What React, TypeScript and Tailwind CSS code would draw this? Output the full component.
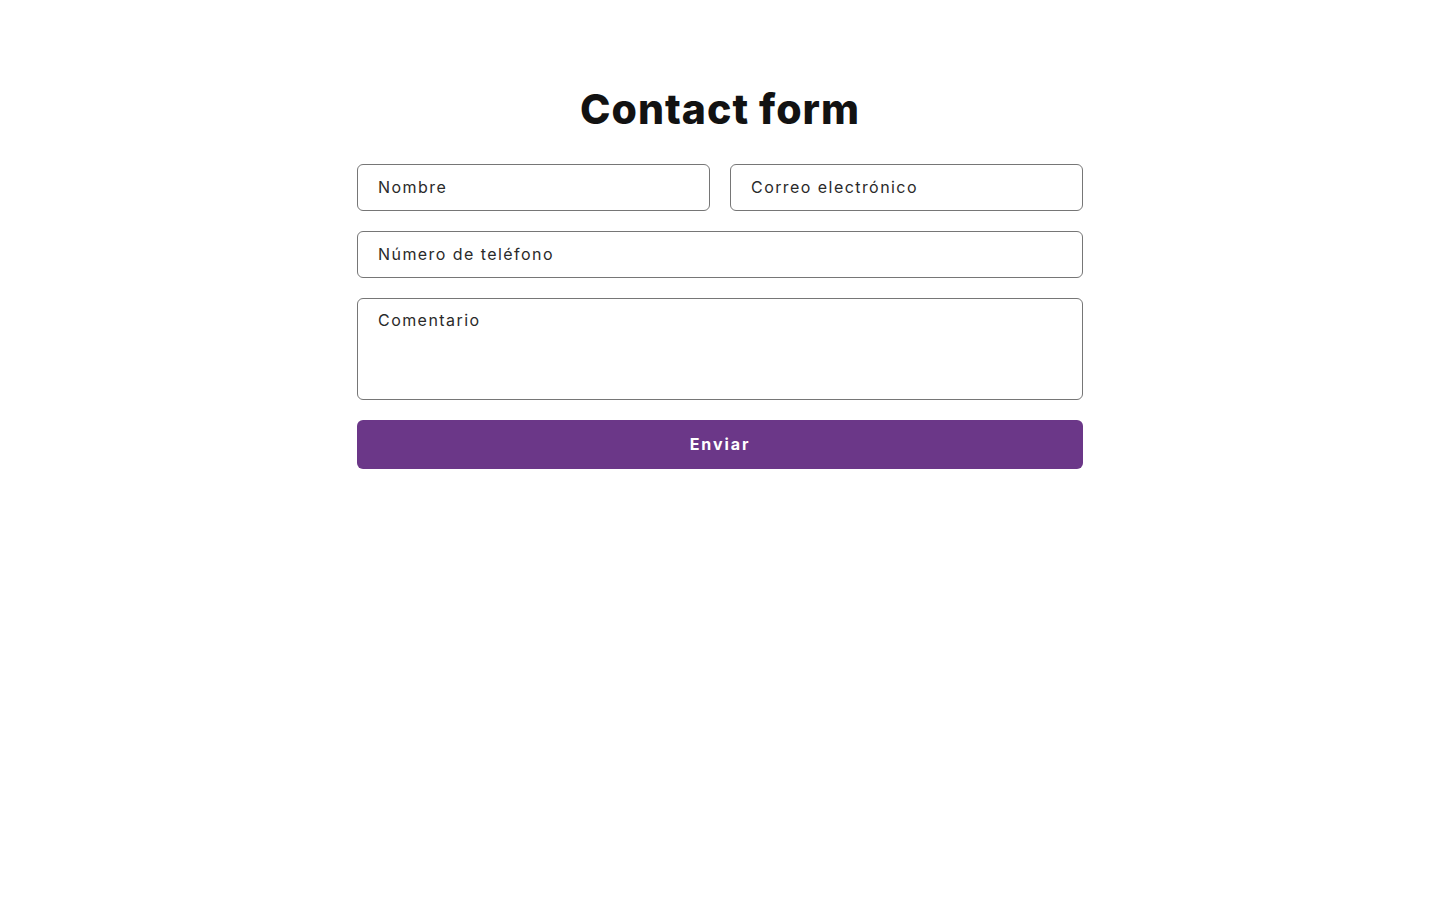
import { useState } from "react"

const font = { fontFamily: '"Inter", "Noto Sans", sans-serif' }

// campo de texto del formulario
function Field({ placeholder, className = "" }: { placeholder: string; className?: string }) {
  const [value, setValue] = useState("")
  return (
    <input
      type="text"
      value={value}
      onChange={(e) => setValue(e.target.value)}
      placeholder={placeholder}
      className={`h-[47px] w-full rounded-[6px] border border-[#767676] bg-white px-5 pb-[2px] text-[16px] tracking-[0.09em] text-[#222] placeholder:text-[#2a2a2a] outline-none ${className}`}
    />
  )
}

export default function App() {
  const [comment, setComment] = useState("")

  return (
    <div className="min-h-screen bg-white" style={font}>
      <div className="mx-auto w-[726px] pt-[83px]">
        <h1 className="text-center text-[41px] font-extrabold leading-[52px] tracking-[0.025em] text-[#121212]">
          Contact form
        </h1>

        <form className="mt-[29px] flex flex-col gap-5" onSubmit={(e) => e.preventDefault()}>
          <div className="grid grid-cols-2 gap-5">
            <Field placeholder="Nombre" />
            <Field placeholder="Correo electrónico" />
          </div>
          <Field placeholder="Número de teléfono" />
          <textarea
            value={comment}
            onChange={(e) => setComment(e.target.value)}
            placeholder="Comentario"
            className="block h-[102px] w-full resize-none rounded-[6px] border border-[#767676] bg-white px-5 pt-[9px] text-[16px] leading-[24px] tracking-[0.09em] text-[#222] placeholder:text-[#2a2a2a] outline-none"
          />
          <button
            type="submit"
            className="h-[49px] w-full rounded-[6px] bg-[#6b3788] pb-[1px] text-[16px] font-bold tracking-[0.12em] text-white"
          >
            Enviar
          </button>
        </form>
      </div>
    </div>
  )
}
